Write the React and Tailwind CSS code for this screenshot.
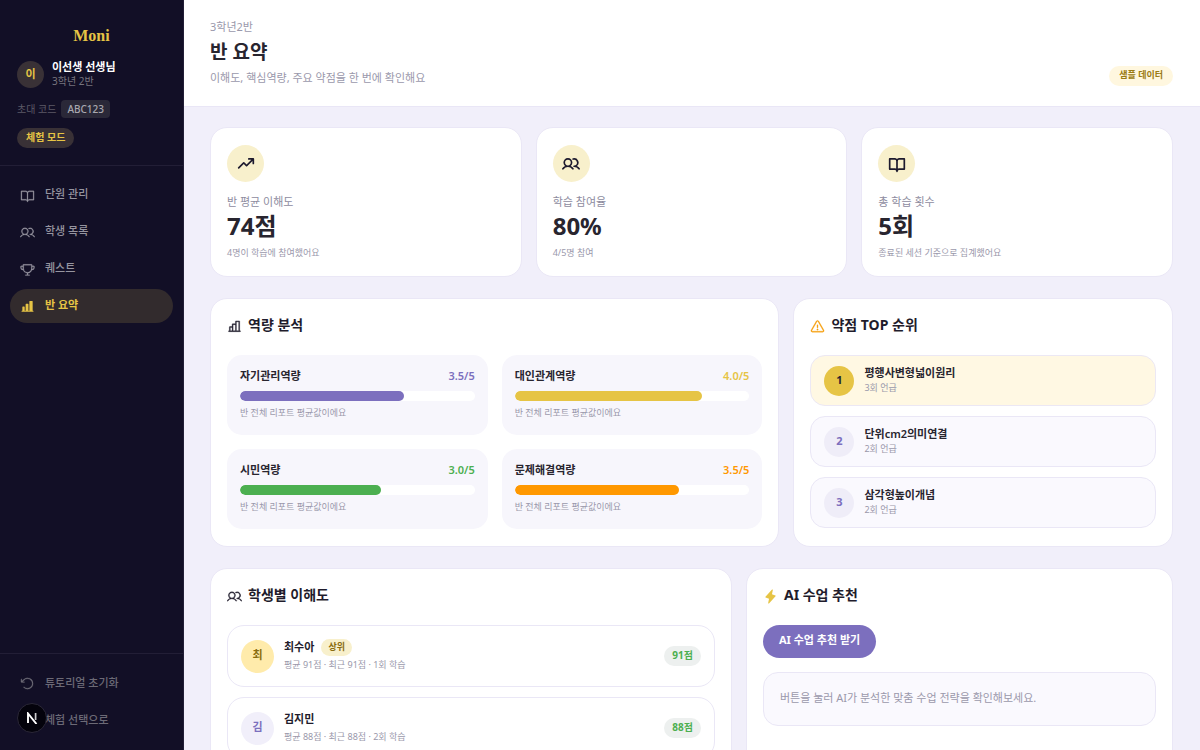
import React from "react";
import {
  PiArrowCounterClockwise,
  PiBookOpen,
  PiBookOpenBold,
  PiChartBar,
  PiChartBarFill,
  PiLightningFill,
  PiSignOut,
  PiTrendUpBold,
  PiTrophy,
  PiUsers,
  PiUsersBold,
  PiWarning,
} from "react-icons/pi";

const navItems = [
  { label: "단원 관리", icon: PiBookOpen },
  { label: "학생 목록", icon: PiUsers },
  { label: "퀘스트", icon: PiTrophy },
  { label: "반 요약", icon: PiChartBarFill, active: true },
];

const stats = [
  { label: "반 평균 이해도", value: "74점", note: "4명이 학습에 참여했어요", icon: PiTrendUpBold },
  { label: "학습 참여율", value: "80%", note: "4/5명 참여", icon: PiUsersBold },
  { label: "총 학습 횟수", value: "5회", note: "종료된 세션 기준으로 집계했어요", icon: PiBookOpenBold },
];

const skills = [
  { label: "자기관리역량", score: 3.5, text: "text-[#7c6fbe]", bar: "bg-[#7c6fbe]" },
  { label: "대인관계역량", score: 4.0, text: "text-[#e6c445]", bar: "bg-[#e6c445]" },
  { label: "시민역량", score: 3.0, text: "text-[#4caf50]", bar: "bg-[#4caf50]" },
  { label: "문제해결역량", score: 3.5, text: "text-[#ff9800]", bar: "bg-[#ff9800]" },
];

const weaknesses = [
  { name: "평행사변형넓이원리", count: 3 },
  { name: "단위cm2의미연결", count: 2 },
  { name: "삼각형높이개념", count: 2 },
];

const students = [
  { name: "최수아", average: 91, recent: 91, sessions: 1, top: true },
  { name: "김지민", average: 88, recent: 88, sessions: 2 },
];

function Sidebar() {
  return (
    <aside className="sticky top-0 flex h-screen w-[184px] shrink-0 flex-col border-r border-[#221e36] bg-[#120f26]">
      <div className="border-b border-[#221e36] px-[17px] pt-[25px] pb-[17px]">
        <p className="text-center font-['Liberation_Serif',serif] text-[16px] leading-[22px] font-bold text-[#e6c445]">
          Moni
        </p>
        <div className="mt-[13px] flex items-center gap-2">
          <span className="flex size-[27px] shrink-0 items-center justify-center rounded-full bg-[#393136] pb-px text-[11px] leading-4 font-bold text-[#e6c445]">
            이
          </span>
          <div>
            <p className="text-[11px] leading-[14px] font-bold text-white">이선생 선생님</p>
            <p className="text-[10px] leading-[14px] text-[#77757f]">3학년 2반</p>
          </div>
        </div>
        <div className="mt-3 flex items-center gap-[5px] text-[10px]">
          <span className="text-[#5c5a66]">초대 코드</span>
          <span className="rounded-[4px] bg-[#2a2838] px-1.5 text-[10px] leading-[18px] font-medium text-[#a9a8b0]">
            ABC123
          </span>
        </div>
        <span className="mt-2.5 block w-fit rounded-full bg-[#393136] px-[9px] pb-0.5 text-[10px] leading-[18px] font-bold text-[#e6c445]">
          체험 모드
        </span>
      </div>
      <nav className="flex flex-1 flex-col gap-[3px] px-2.5 pt-3">
        {navItems.map(({ label, icon: Icon, active }) => (
          <a
            key={label}
            href="#"
            className={
              active
                ? "flex h-[34px] items-center gap-2.5 rounded-full bg-[#322b2d] px-2.5 text-[11px] font-bold text-[#e6c445]"
                : "flex h-[34px] items-center gap-2.5 rounded-full px-2.5 text-[11px] font-medium text-[#9695a0]"
            }
          >
            <Icon strokeWidth={active ? 0 : 4} className="size-[15px] shrink-0" />
            <span className="pb-0.5 leading-4">{label}</span>
          </a>
        ))}
      </nav>
      <div className="flex flex-col gap-[3px] border-t border-[#221e36] px-2.5 pt-3 pb-[13px]">
        <button className="flex h-[34px] items-center gap-2.5 px-2.5 text-[11px] font-medium text-[#6c6a76]">
          <PiArrowCounterClockwise strokeWidth={4} className="size-[15px] shrink-0" />
          <span className="leading-4">튜토리얼 초기화</span>
        </button>
        <button className="flex h-[34px] items-center gap-2.5 px-2.5 text-[11px] font-medium text-[#6c6a76]">
          <PiSignOut strokeWidth={4} className="size-[15px] shrink-0" />
          <span className="leading-4">체험 선택으로</span>
        </button>
      </div>
    </aside>
  );
}

function PageHeader() {
  return (
    <header className="flex items-end justify-between border-b border-[#e9e6f6] bg-white py-5 pr-[27px] pl-[26px]">
      <div>
        <p className="text-[11px] leading-[14px] text-[#9a98ab]">3학년2반</p>
        <h1 className="mt-[5px] text-[19px] leading-[26px] font-bold text-[#28252f]">반 요약</h1>
        <p className="mt-[5px] text-[11px] leading-4 text-[#9a98ab]">이해도, 핵심역량, 주요 약점을 한 번에 확인해요</p>
      </div>
      <span className="rounded-full bg-[#fff7df] px-2.5 pb-0.5 text-[9px] leading-[18px] font-bold text-[#9a7b13]">
        샘플 데이터
      </span>
    </header>
  );
}

function StatCard({ label, value, note, icon: Icon }) {
  return (
    <article className="rounded-[17px] border border-[#eae7f6] bg-white px-4 pt-[17px] pb-4">
      <span className="flex size-[37px] items-center justify-center rounded-full bg-[#f8f0cc] text-[#1d1a2e]">
        <Icon className="size-[18px]" />
      </span>
      <p className="mt-3 text-[11px] leading-4 text-[#8e8ca0]">{label}</p>
      <p className="text-[24px] leading-8 font-bold text-[#28252f]">{value}</p>
      <p className="mt-1 text-[9px] leading-[14px] text-[#9a98ab]">{note}</p>
    </article>
  );
}

function Panel({ title, icon, children }) {
  return (
    <section className="rounded-[17px] border border-[#eae7f6] bg-white px-4 py-[17px]">
      <h2 className="mb-[19px] flex h-5 items-center gap-1.5 text-[14px] leading-5 font-bold text-[#1f1c2c]">
        {icon}
        <span className="pb-0.5">{title}</span>
      </h2>
      {children}
    </section>
  );
}

function SkillCard({ label, score, text, bar }) {
  return (
    <div className="rounded-[15px] bg-[#f7f6fc] px-[13px] pt-3 pb-3.5">
      <div className="flex justify-between text-[11px] leading-[18px]">
        <span className="font-semibold text-[#28252f]">{label}</span>
        <span className={`font-semibold ${text}`}>{score.toFixed(1)}/5</span>
      </div>
      <div className="mt-1.5 h-2.5 overflow-hidden rounded-full bg-white">
        <div className={`h-full rounded-full ${bar}`} style={{ width: `${(score / 5) * 100}%` }} />
      </div>
      <p className="mt-1 text-[9px] leading-4 text-[#9a98ab]">반 전체 리포트 평균값이에요</p>
    </div>
  );
}

function WeaknessRow({ rank, name, count }) {
  const first = rank === 1;
  return (
    <li
      className={
        first
          ? "flex h-[51px] items-center gap-2.5 rounded-[15px] border border-[#ece8f4] bg-[#fff8e3] px-[13px]"
          : "flex h-[51px] items-center gap-2.5 rounded-[15px] border border-[#eae7f6] bg-[#faf9fe] px-[13px]"
      }
    >
      <span
        className={
          first
            ? "flex size-[30px] shrink-0 items-center justify-center rounded-full bg-[#e6c445] text-[11px] font-bold text-[#28252f]"
            : "flex size-[30px] shrink-0 items-center justify-center rounded-full bg-[#efedf8] text-[11px] font-bold text-[#7c6fbe]"
        }
      >
        {rank}
      </span>
      <div className="pb-0.5">
        <p className="text-[11px] leading-4 font-semibold text-[#28252f]">{name}</p>
        <p className="text-[9px] leading-[14px] text-[#9a98ab]">{count}회 언급</p>
      </div>
    </li>
  );
}

function StudentRow({ name, average, recent, sessions, top }) {
  return (
    <li className="flex h-[62px] items-center gap-2.5 rounded-[17px] border border-[#eae7f6] px-[13px]">
      <span
        className={
          top
            ? "flex size-[33px] shrink-0 items-center justify-center rounded-full bg-[#ffebab] pb-px text-[11px] font-bold text-[#8a6d10]"
            : "flex size-[33px] shrink-0 items-center justify-center rounded-full bg-[#f1effa] pb-px text-[11px] font-bold text-[#7c6fbe]"
        }
      >
        {name[0]}
      </span>
      <div className="flex-1">
        <div className="flex items-center gap-[7px]">
          <span className="text-[11px] leading-[18px] font-bold text-[#1f1c2c]">{name}</span>
          {top && (
            <span className="rounded-full bg-[#f8f0cc] px-[7px] pb-px text-[9px] leading-4 font-bold text-[#8a6d10]">
              상위
            </span>
          )}
        </div>
        <p className="text-[9px] leading-[18px] text-[#9a98ab]">
          평균 {average}점 · 최근 {recent}점 · {sessions}회 학습
        </p>
      </div>
      <span className="rounded-full bg-[#edf0ef] px-2 pb-0.5 text-[10px] leading-[18px] font-bold text-[#4caf50]">
        {average}점
      </span>
    </li>
  );
}

export default function App() {
  return (
    <div className="flex min-h-screen bg-[#f1effa] font-['Noto_Sans','Noto_Sans_CJK_KR',sans-serif]">
      <Sidebar />
      <main className="min-w-0 flex-1">
        <PageHeader />
        <div className="flex flex-col gap-[21px] pt-5 pr-[27px] pb-6 pl-[26px]">
          <div className="grid grid-cols-3 gap-3.5">
            {stats.map((stat) => (
              <StatCard key={stat.label} {...stat} />
            ))}
          </div>
          <div className="grid grid-cols-[3fr_2fr] gap-3.5">
            <Panel title="역량 분석" icon={<PiChartBar strokeWidth={6} className="size-[15px]" />}>
              <div className="grid grid-cols-2 gap-3.5">
                {skills.map((skill) => (
                  <SkillCard key={skill.label} {...skill} />
                ))}
              </div>
            </Panel>
            <Panel title="약점 TOP 순위" icon={<PiWarning strokeWidth={6} className="size-[15px] text-[#f59e0b]" />}>
              <ol className="flex flex-col gap-2.5">
                {weaknesses.map((item, index) => (
                  <WeaknessRow key={item.name} rank={index + 1} {...item} />
                ))}
              </ol>
            </Panel>
          </div>
          <div className="grid grid-cols-[11fr_9fr] gap-3.5">
            <Panel title="학생별 이해도" icon={<PiUsers strokeWidth={6} className="size-[15px]" />}>
              <ul className="flex flex-col gap-2.5">
                {students.map((student) => (
                  <StudentRow key={student.name} {...student} />
                ))}
              </ul>
            </Panel>
            <Panel title="AI 수업 추천" icon={<PiLightningFill className="size-[15px] text-[#e6c445]" />}>
              <button className="h-[33px] rounded-full bg-[#7c6fbe] px-4 pb-0.5 text-[11px] font-bold text-white">
                AI 수업 추천 받기
              </button>
              <p className="mt-3.5 rounded-[15px] border border-[#eae7f6] bg-[#faf9fe] px-4 pt-4 pb-[18px] text-[11px] leading-[18px] text-[#9a98ab]">
                버튼을 눌러 AI가 분석한 맞춤 수업 전략을 확인해보세요.
              </p>
            </Panel>
          </div>
        </div>
      </main>
      <div className="fixed bottom-[17px] left-[17px] flex size-[30px] items-center justify-center rounded-full border border-[#2b2838] bg-[#04030c]">
        <svg viewBox="0 0 12 12" className="size-3" fill="none" aria-hidden="true">
          <path d="M2 11V1.5L10.5 12" stroke="white" strokeWidth="1.9" />
          <path d="M9.6 1v7" stroke="white" strokeOpacity="0.8" strokeWidth="1.7" />
        </svg>
      </div>
    </div>
  );
}
